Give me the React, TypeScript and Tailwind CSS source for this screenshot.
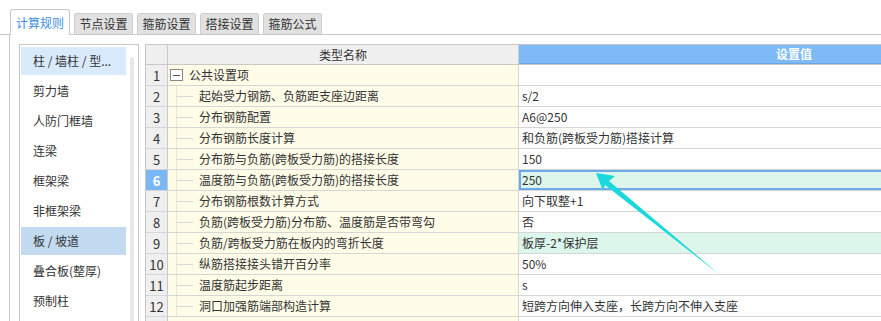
import React from "react";

type Row = { n?: number; name?: string; value?: string; group?: boolean; selected?: boolean; green?: boolean };

const rows: Row[] = [
  { n: 1, name: "公共设置项", value: "", group: true },
  { n: 2, name: "起始受力钢筋、负筋距支座边距离", value: "s/2" },
  { n: 3, name: "分布钢筋配置", value: "A6@250" },
  { n: 4, name: "分布钢筋长度计算", value: "和负筋(跨板受力筋)搭接计算" },
  { n: 5, name: "分布筋与负筋(跨板受力筋)的搭接长度", value: "150" },
  { n: 6, name: "温度筋与负筋(跨板受力筋)的搭接长度", value: "250", selected: true },
  { n: 7, name: "分布钢筋根数计算方式", value: "向下取整+1" },
  { n: 8, name: "负筋(跨板受力筋)分布筋、温度筋是否带弯勾", value: "否" },
  { n: 9, name: "负筋/跨板受力筋在板内的弯折长度", value: "板厚-2*保护层", green: true },
  { n: 10, name: "纵筋搭接接头错开百分率", value: "50%" },
  { n: 11, name: "温度筋起步距离", value: "s" },
  { n: 12, name: "洞口加强筋端部构造计算", value: "短跨方向伸入支座，长跨方向不伸入支座" },
  {},
];

const listItems = [
  "柱 / 墙柱 / 型...",
  "剪力墙",
  "人防门框墙",
  "连梁",
  "框架梁",
  "非框架梁",
  "板 / 坡道",
  "叠合板(整厚)",
  "预制柱",
];

const tabs = ["节点设置", "箍筋设置", "搭接设置", "箍筋公式"];

export default function App() {
  return (
    <div
      className="relative w-[881px] h-[321px] overflow-hidden bg-white text-[12px] text-[#333]"
      style={{ fontFamily: '"Noto Sans CJK SC", "Noto Sans", sans-serif' }}
    >
      {/* Tabs */}
      <div className="flex items-end gap-[4px] pl-[10px] pt-[9px] border-b border-[#c8c8c8] h-[35px]">
        <div className="w-[60px] h-[26px] -mb-px bg-white border border-b-0 border-[#c8c8c8] rounded-t-[3px] flex items-center justify-center text-[#3a8ee0] leading-none">
          计算规则
        </div>
        {tabs.map((t) => (
          <div
            key={t}
            className="w-[59px] h-[21px] bg-[#e1e1e1] border border-b-0 border-[#cdcdcd] rounded-t-[3px] flex items-center justify-center leading-none"
          >
            {t}
          </div>
        ))}
      </div>

      {/* Content */}
      <div className="ml-[9px] border-l border-[#c8c8c8] h-[290px] pl-[9px] pt-[9px] flex gap-[6px]">
        {/* Left list */}
        <div className="w-[120px] h-[300px] shrink-0 border border-[#c8c8c8] bg-white flex pl-px pt-px">
          <div className="w-[105px] flex flex-col">
            {listItems.map((it, i) => (
              <div
                key={it}
                className={
                  "h-[28px] my-px pl-[12px] flex items-center leading-none " +
                  (i === 0 ? "bg-[#d8eafc]" : i === 6 ? "bg-[#c3dbf1]" : "")
                }
              >
                {it}
              </div>
            ))}
          </div>
          <div className="ml-[4px] mt-[11px] w-[4px] h-[280px] rounded-full bg-[#e8e8e8]" />
        </div>

        {/* Grid */}
        <div className="flex-1 h-[300px] border-l border-t border-[#c8c8c8] overflow-hidden">
          <div className="w-[950px]">
            {/* Header */}
            <div className="flex h-[20px] border-b border-[#c8c8c8]">
              <div className="w-[22px] shrink-0 bg-[#efefef] border-r border-[#c8c8c8]" />
              <div className="w-[351px] shrink-0 bg-[#f0f0f0] border-r border-[#d0d0d0] flex items-center justify-center leading-none">
                类型名称
              </div>
              <div className="w-[550px] shrink-0 bg-[#7dbaf6] border-b border-[#6aa6e6] flex items-center justify-center text-white font-bold leading-none">
                设置值
              </div>
            </div>
            {rows.map((r, i) => (
              <div key={i} className="flex h-[21px] border-b border-[#d6d6d6]">
                <div
                  className={
                    "w-[22px] shrink-0 border-r border-[#c8c8c8] flex items-center justify-center text-[13px] leading-none " +
                    (r.selected ? "bg-[#7ab8f5] text-white font-bold" : "bg-[#efefef] text-[#333]")
                  }
                >
                  {r.n ?? ""}
                </div>
                <div className="w-[351px] shrink-0 bg-[#fffce8] border-r border-[#d6d6d6] flex items-stretch leading-none">
                  {r.group ? (
                    <div className="flex items-center pl-[2px]">
                      <div className="w-[13px] h-[12px] border border-[#888] bg-white flex items-center justify-center">
                        <div className="w-[7px] h-px bg-[#555]" />
                      </div>
                      <span className="ml-[6px]">{r.name}</span>
                    </div>
                  ) : r.name ? (
                    <div className="flex items-stretch pl-[8px]">
                      <div className="w-[17px] border-l border-[#ece6cc] flex items-center">
                        <div className="w-full h-px bg-[#d8d8d8]" />
                      </div>
                      <span className="ml-[6px] flex items-center">{r.name}</span>
                    </div>
                  ) : null}
                </div>
                <div
                  className={
                    "w-[550px] shrink-0 flex items-center pl-[3px] leading-none " +
                    (r.selected
                      ? "bg-[#dcf6ec] ring-2 ring-inset ring-[#6aaae8]"
                      : r.green
                      ? "bg-[#dcf6ec]"
                      : "bg-white")
                  }
                >
                  {r.value}
                </div>
              </div>
            ))}
          </div>
        </div>
      </div>

      {/* Annotation arrow */}
      <svg className="absolute left-0 top-0 pointer-events-none" width="881" height="321">
        <polygon
          points="596,173 615,176 609,181 720,275 605,185 603,191"
          fill="#1ad8db"
        />
      </svg>
    </div>
  );
}
